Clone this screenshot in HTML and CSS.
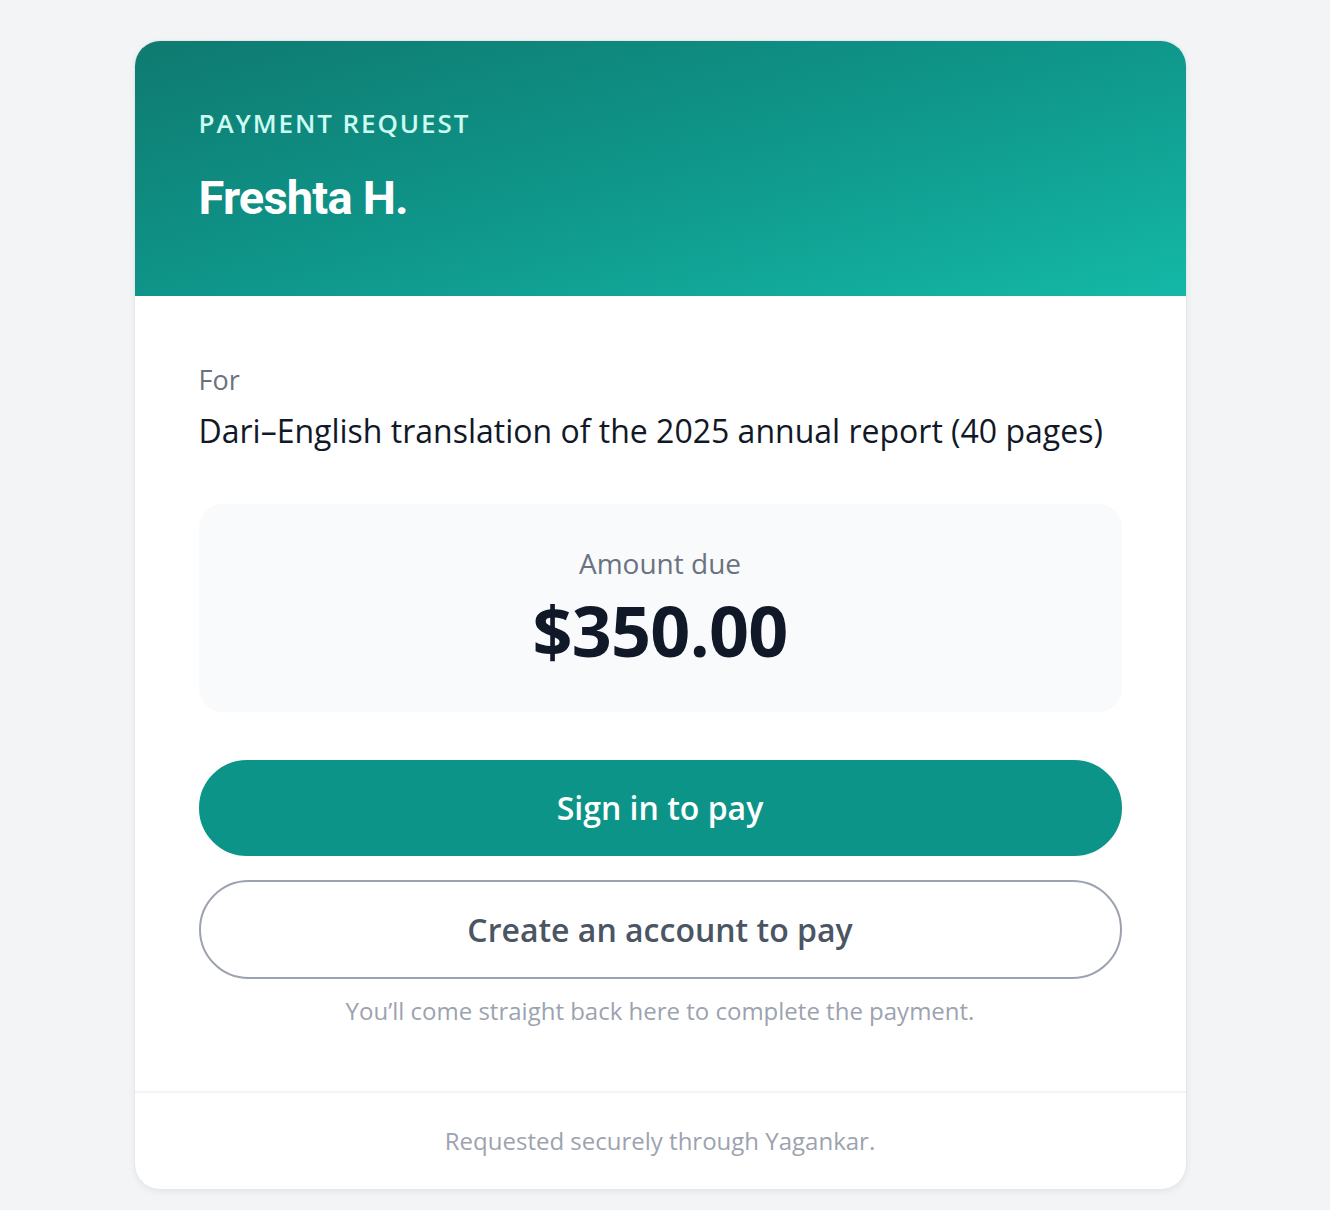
FILE: index.html
```html
<!DOCTYPE html>
<html lang="en">
<head>
<meta charset="utf-8">
<title>Payment request</title>
<link rel="stylesheet" href="styles.css">
</head>
<body>
<div class="page">
  <main class="card">
    <header class="card-head">
      <div class="eyebrow">Payment request</div>
      <h1 class="payee">Freshta H.</h1>
    </header>
    <section class="card-body">
      <div class="for-label">For</div>
      <div class="for-text">Dari–English translation of the 2025 annual report (40 pages)</div>
      <div class="amount-box">
        <div class="amount-label">Amount due</div>
        <div class="amount">$350.00</div>
      </div>
      <div class="actions">
        <button class="btn btn-primary">Sign in to pay</button>
        <button class="btn btn-outline">Create an account to pay</button>
      </div>
      <p class="note">You’ll come straight back here to complete the payment.</p>
    </section>
    <footer class="card-foot">Requested securely through Yagankar.</footer>
  </main>
</div>
</body>
</html>
```

FILE: styles.css
```css
* { box-sizing: border-box; }
html, body { margin: 0; padding: 0; }
body {
  background: #f3f4f6;
  font-family: "Open Sans", "Liberation Sans", sans-serif;
  color: #111827;
}
.page {
  display: flex;
  justify-content: center;
  padding: 40px 10px 20px 0;
}
.card {
  width: 1053px;
  background: #ffffff;
  border: 1px solid #e5e7eb;
  border-radius: 26px;
  overflow: hidden;
  box-shadow: 0 2px 6px rgba(17, 24, 39, 0.06);
}
.card-head {
  height: 255px;
  padding: 64px 64px 0;
  background: linear-gradient(165deg, #0f7a70 0%, #0f968a 50%, #14b8a6 100%);
}
.eyebrow {
  font-family: "Open Sans", sans-serif;
  font-weight: 600;
  font-size: 26px;
  line-height: 36px;
  letter-spacing: 1.9px;
  text-transform: uppercase;
  color: #ccfbf1;
}
.payee {
  margin: 29px 0 0;
  font-family: Roboto, "Liberation Sans", sans-serif;
  font-weight: 700;
  font-size: 47px;
  line-height: 56px;
  letter-spacing: -0.8px;
  color: #ffffff;
}
.card-body {
  padding: 64px 64px 64px;
  border-bottom: 2px solid #f3f4f6;
}
.for-label {
  font-size: 27px;
  line-height: 40px;
  color: #6b7280;
}
.for-text {
  margin-top: 8px;
  font-size: 32px;
  line-height: 46px;
  color: #111827;
}
.amount-box {
  margin-top: 50px;
  background: #f8fafc;
  border-radius: 24px;
  padding: 39px 24px 47px;
  text-align: center;
}
.amount-label {
  font-size: 28px;
  line-height: 40px;
  color: #6b7280;
}
.amount {
  margin-top: 12px;
  font-size: 70px;
  line-height: 70px;
  font-weight: 700;
  letter-spacing: -0.7px;
  color: #111827;
}
.actions {
  margin-top: 48px;
  display: flex;
  flex-direction: column;
  gap: 24px;
}
.btn {
  display: block;
  width: 100%;
  border-radius: 999px;
  font-family: "Open Sans", sans-serif;
  font-weight: 600;
  font-size: 32px;
  line-height: 40px;
  cursor: pointer;
}
.btn-primary {
  height: 96px;
  background: #0d9488;
  border: 2px solid #0d9488;
  color: #ffffff;
}
.btn-outline {
  height: 99px;
  background: #ffffff;
  border: 2px solid #9ca3af;
  color: #4b5563;
}
.note {
  margin: 16px 0 0;
  text-align: center;
  font-size: 24px;
  line-height: 32px;
  color: #9ca3af;
}
.card-foot {
  padding: 31px 0 31px;
  text-align: center;
  font-size: 24px;
  line-height: 34px;
  color: #9ca3af;
}
```
